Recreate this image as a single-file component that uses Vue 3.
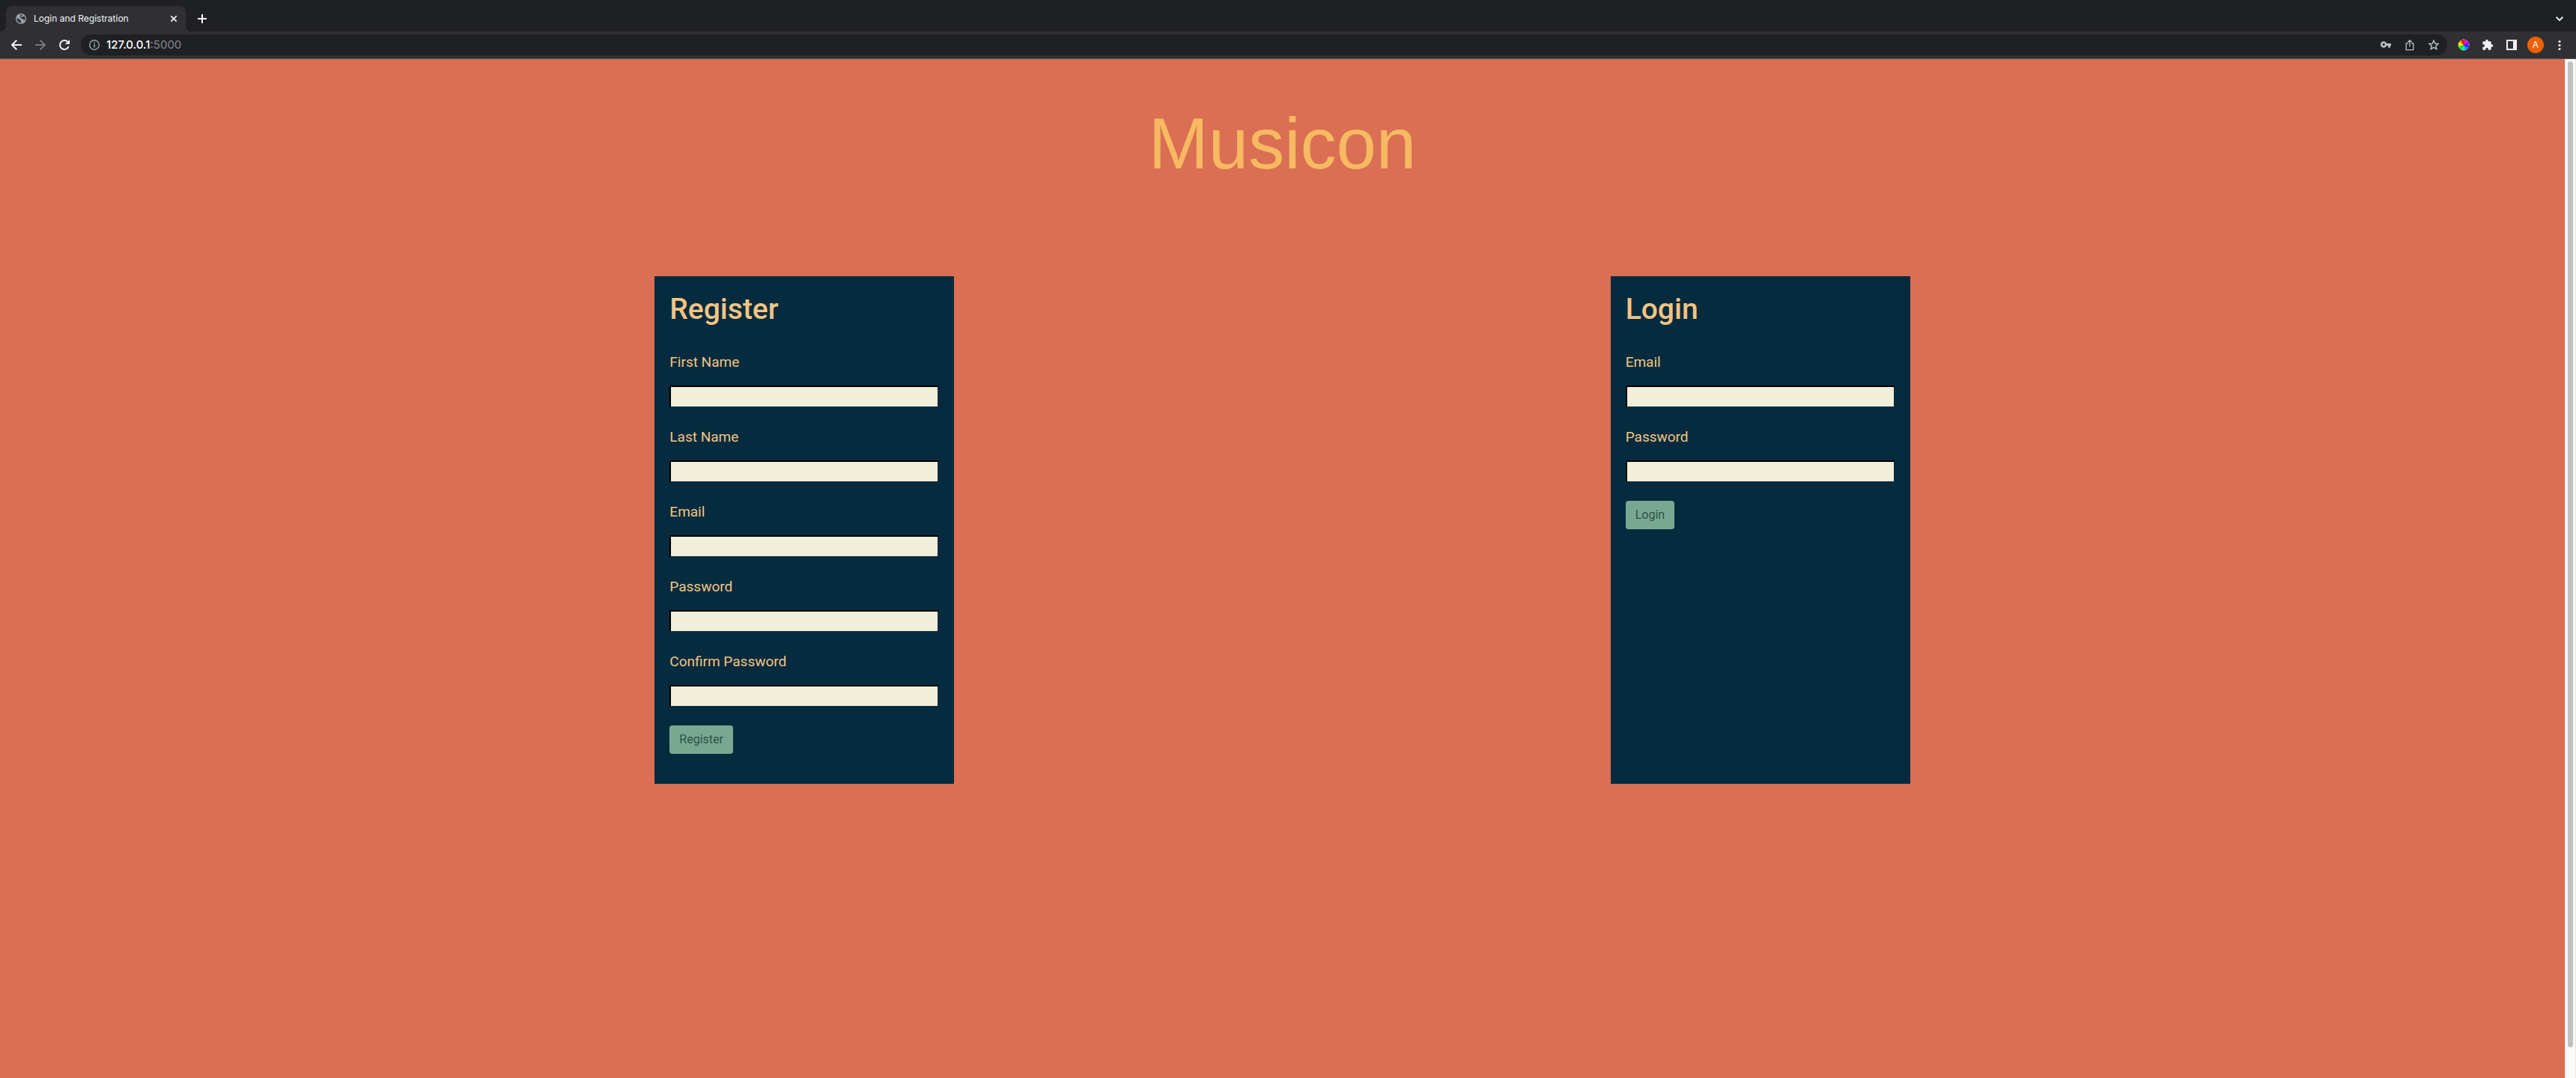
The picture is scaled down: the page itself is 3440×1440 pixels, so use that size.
<script setup>
import { reactive } from 'vue'

const forms = reactive([
  {
    id: 'register',
    title: 'Register',
    fields: [
      { name: 'first_name', label: 'First Name', type: 'text', value: '' },
      { name: 'last_name', label: 'Last Name', type: 'text', value: '' },
      { name: 'email', label: 'Email', type: 'email', value: '' },
      { name: 'password', label: 'Password', type: 'password', value: '' },
      { name: 'confirm_password', label: 'Confirm Password', type: 'password', value: '' }
    ]
  },
  {
    id: 'login',
    title: 'Login',
    fields: [
      { name: 'email', label: 'Email', type: 'email', value: '' },
      { name: 'password', label: 'Password', type: 'password', value: '' }
    ]
  }
])

const wheelColors = ['#f0a', '#f0f', '#90f', '#22f', '#08f', '#0cf', '#0fa', '#0e0', '#8f0', '#ff0', '#f90', '#f00']
const wedge = (i) => {
  const point = (a) => `${8 + 7 * Math.cos(a)} ${8 + 7 * Math.sin(a)}`
  const start = ((i - 3) * Math.PI) / 6
  return `M8 8L${point(start)}A7 7 0 0 1 ${point(start + Math.PI / 6)}Z`
}
</script>

<template>
  <div class="window">
    <header class="browser">
      <div class="tabs">
        <div class="tab">
          <svg class="globe" width="14" height="14" viewBox="0 0 14 14">
            <circle cx="7" cy="7" r="7" fill="#9aa0a6" />
            <path d="M1.4 6.2L4 7.2Q5.6 7.4 5.6 8.6T7.2 10V12.6A5.7 5.7 0 0 1 1.4 6.2ZM5.4 1.6L8.8 1.6 8 3.2 6 4 5.6 5.4 7.4 6 8.8 7.6 10.6 7.8 11.2 9.6 12.4 8.4A5.8 5.8 0 0 0 11 3L9.6 4.6 8 5 7.4 4.4Z" fill="#303034" />
          </svg>
          <span class="tab-title">Login and Registration</span>
          <button class="close" type="button" aria-label="Close tab">
            <svg width="16" height="16" viewBox="0 0 16 16"><path d="M4.3 4.3L11.7 11.7M11.7 4.3L4.3 11.7" stroke="#f1f3f4" stroke-width="1.7" /></svg>
          </button>
        </div>
        <button class="new-tab" type="button" aria-label="New tab">
          <svg width="16" height="16" viewBox="0 0 16 16"><path d="M8 2V14M2 8H14" stroke="#fff" stroke-width="2" /></svg>
        </button>
        <button class="icon tab-search" type="button" aria-label="Search tabs">
          <svg width="16" height="16" viewBox="0 0 16 16"><path d="M3.6 5.8L8 10.2L12.4 5.8" fill="none" stroke="#e8eaed" stroke-width="2" /></svg>
        </button>
      </div>
      <div class="toolbar">
        <button class="icon" type="button" aria-label="Back">
          <svg width="16" height="16" viewBox="0 0 16 16"><path d="M15 8H2.4M8.3 1.7L2 8L8.3 14.3" fill="none" stroke="#f1f3f4" stroke-width="2" /></svg>
        </button>
        <button class="icon" type="button" aria-label="Forward">
          <svg width="16" height="16" viewBox="0 0 16 16"><path d="M1 8H13.6M7.7 1.7L14 8L7.7 14.3" fill="none" stroke="#77787c" stroke-width="2" /></svg>
        </button>
        <button class="icon" type="button" aria-label="Reload">
          <svg width="16" height="16" viewBox="0 0 16 16"><path d="M13.6 10.2A6 6 0 1 1 12.4 3.9" fill="none" stroke="#f1f3f4" stroke-width="2" /><path d="M15 1V7H9Z" fill="#f1f3f4" /></svg>
        </button>
        <div class="omnibox">
          <button class="icon" type="button" aria-label="Site information">
            <svg width="16" height="16" viewBox="0 0 16 16"><circle cx="8" cy="8" r="6.3" fill="none" stroke="#9aa0a6" stroke-width="1.4" /><path d="M8 7V11.5M8 4.3V5.9" stroke="#9aa0a6" stroke-width="1.6" /></svg>
          </button>
          <span class="address">127.0.0.1<span class="port">:5000</span></span>
          <button class="icon" type="button" aria-label="Passwords">
            <svg width="16" height="16" viewBox="0 0 16 16"><path fill-rule="evenodd" d="M5.2 3.2A4.2 4.2 0 1 0 9.1 9H11V11.4H14V9H15V6H9.1A4.2 4.2 0 0 0 5.2 3.2ZM5.2 5.8A1.6 1.6 0 1 1 5.2 9A1.6 1.6 0 1 1 5.2 5.8Z" fill="#bdc1c6" /></svg>
          </button>
          <button class="icon" type="button" aria-label="Share">
            <svg width="16" height="16" viewBox="0 0 16 16"><path d="M5.5 6H3.2V14.6H12.8V6H10.5M8 10.6V2M5 4.6L8 1.7L11 4.6" fill="none" stroke="#bdc1c6" stroke-width="1.3" stroke-linejoin="round" /></svg>
          </button>
          <button class="icon" type="button" aria-label="Bookmark">
            <svg width="16" height="16" viewBox="0 0 16 16"><path d="M8 2.2L9.7 6.1L14 6.5L10.8 9.3L11.8 13.5L8 11.3L4.2 13.5L5.2 9.3L2 6.5L6.3 6.1Z" fill="none" stroke="#c4c7cb" stroke-width="1.4" /></svg>
          </button>
        </div>
        <button class="icon" type="button" aria-label="Color picker">
          <svg width="16" height="16" viewBox="0 0 16 16"><circle cx="8" cy="8" r="7" fill="none" stroke="#aaa" stroke-width="1" /><path v-for="(color, i) in wheelColors" :key="color" :d="wedge(i)" :fill="color" /><path d="M8 0V2M8 14V16M0 8H2M14 8H16" stroke="#999" /></svg>
        </button>
        <button class="icon" type="button" aria-label="Extensions">
          <svg width="16" height="16" viewBox="0 0 24 24"><path d="M20.5 11H19V7c0-1.1-.9-2-2-2h-4V3.5C13 2.1 11.9 1 10.5 1S8 2.1 8 3.5V5H4c-1.1 0-2 .9-2 2v3.8h1.5c1.5 0 2.7 1.2 2.7 2.7S5 16.2 3.5 16.2H2V20c0 1.1.9 2 2 2h3.8v-1.5c0-1.5 1.2-2.7 2.7-2.7s2.7 1.2 2.7 2.7V22H17c1.1 0 2-.9 2-2v-4h1.5c1.4 0 2.5-1.1 2.5-2.5S21.9 11 20.5 11z" fill="#f1f3f4" /></svg>
        </button>
        <button class="icon" type="button" aria-label="Side panel">
          <svg width="16" height="16" viewBox="0 0 16 16"><path fill-rule="evenodd" d="M1 1H15V15H1ZM3 3V13H10V3Z" fill="#f1f3f4" /></svg>
        </button>
        <button class="icon" type="button" aria-label="Profile"><span class="avatar">A</span></button>
        <button class="icon" type="button" aria-label="Menu">
          <svg width="16" height="16" viewBox="0 0 16 16" fill="#f1f3f4"><circle cx="8" cy="3.5" r="1.6" /><circle cx="8" cy="8.5" r="1.6" /><circle cx="8" cy="13.5" r="1.6" /></svg>
        </button>
      </div>
    </header>

    <div class="viewport">
      <main class="page">
        <h1>Musicon</h1>
        <div class="cards">
          <form v-for="form in forms" :key="form.id" class="card" @submit.prevent>
            <h2>{{ form.title }}</h2>
            <div v-for="field in form.fields" :key="field.name" class="field">
              <label :for="`${form.id}-${field.name}`">{{ field.label }}</label>
              <input :id="`${form.id}-${field.name}`" v-model="field.value" :type="field.type" :name="field.name">
            </div>
            <button class="submit" type="submit">{{ form.title }}</button>
          </form>
        </div>
      </main>
      <div class="scrollbar"><div class="thumb"></div></div>
    </div>
  </div>
</template>

<style>
body {
  margin: 0;
}
</style>

<style scoped>
.window {
  display: flex;
  flex-direction: column;
  min-height: 100vh;
  font-family: Inter, "Liberation Sans", sans-serif;
}

.window *,
.tab::before,
.tab::after {
  box-sizing: border-box;
}

button {
  font-family: inherit;
  border: 0;
  padding: 0;
  background: none;
}

svg {
  display: block;
  flex: none;
}

.browser {
  background: #303034;
  border-bottom: 1px solid #55565a;
}

.tabs {
  display: flex;
  height: 42px;
  padding: 8px 6px 0 8px;
  background: #1f2024;
}

.tab {
  position: relative;
  display: flex;
  align-items: center;
  width: 240px;
  padding: 0 8px 0 13px;
  border-radius: 8px 8px 0 0;
  background: #303034;
}

.tab::before,
.tab::after {
  content: "";
  position: absolute;
  bottom: 0;
  width: 8px;
  height: 8px;
}

.tab::before {
  left: -8px;
  background: radial-gradient(circle at 0 0, #1f2024 8px, #303034 8px);
}

.tab::after {
  right: -8px;
  background: radial-gradient(circle at 100% 0, #1f2024 8px, #303034 8px);
}

.tab-title {
  flex: 1;
  margin-left: 10px;
  font-size: 12px;
  line-height: 16px;
  color: #f1f3f4;
  white-space: nowrap;
}

.new-tab {
  display: flex;
  align-items: center;
  justify-content: center;
  width: 28px;
  margin-left: 8px;
}

.icon {
  display: flex;
  align-items: center;
  justify-content: center;
  flex: none;
  width: 32px;
  height: 28px;
}

.tab-search {
  height: 34px;
  margin-left: auto;
}

.toolbar {
  display: flex;
  align-items: center;
  height: 36px;
  padding: 0 6px;
}

.omnibox {
  display: flex;
  flex: 1;
  align-items: center;
  height: 28px;
  margin: 0 6px;
  padding: 0 2px;
  border-radius: 14px;
  background: #1f2024;
}

.address {
  flex: 1;
  font-size: 15px;
  line-height: 20px;
  font-weight: 500;
  color: #fff;
}

.port {
  font-weight: 400;
  color: #85868a;
}

.avatar {
  width: 22px;
  height: 22px;
  border-radius: 50%;
  background: #ef6100;
  font-size: 12px;
  line-height: 22px;
  text-align: center;
  color: #fff;
}

.viewport {
  display: flex;
  flex: 1;
}

.page {
  flex: 1;
  background: #da6f53;
  font-family: Roboto, "Liberation Sans", sans-serif;
}

h1 {
  margin: 0;
  padding: 53px 0 117px;
  font-family: "Liberation Sans", Arial, sans-serif;
  font-size: 96px;
  line-height: 120px;
  font-weight: 400;
  text-align: center;
  color: #f7b962;
}

.cards {
  display: flex;
  justify-content: space-evenly;
  gap: 2px;
}

.card {
  width: 400px;
  padding: 20px 20px 40px;
  background: #062b3e;
}

h2 {
  margin: 0 0 32px;
  font-size: 39px;
  line-height: 48px;
  font-weight: 500;
  color: #f3c483;
}

.field {
  display: flex;
  flex-direction: column;
  gap: 16px;
  margin-bottom: 24px;
}

label {
  font-size: 19px;
  line-height: 30px;
  color: #f3c483;
}

input {
  width: 100%;
  height: 30px;
  padding: 0 4px;
  border: 2px solid;
  border-color: #000 #062b3e #062b3e #000;
  border-radius: 0;
  background: #f1eed9;
  font: inherit;
  font-size: 16px;
}

.submit {
  height: 38px;
  padding: 0 13px;
  border-radius: 4px;
  background: #79a892;
  font-size: 16px;
  line-height: 24px;
  color: #2b5245;
}

.scrollbar {
  width: 15px;
  padding: 3px 3px 0 3px;
  border: solid #e8e8e8;
  border-width: 0 1px;
  background: #fafafa;
}

.thumb {
  height: 97%;
  border-radius: 4px;
  background: #c1c1c1;
}
</style>
